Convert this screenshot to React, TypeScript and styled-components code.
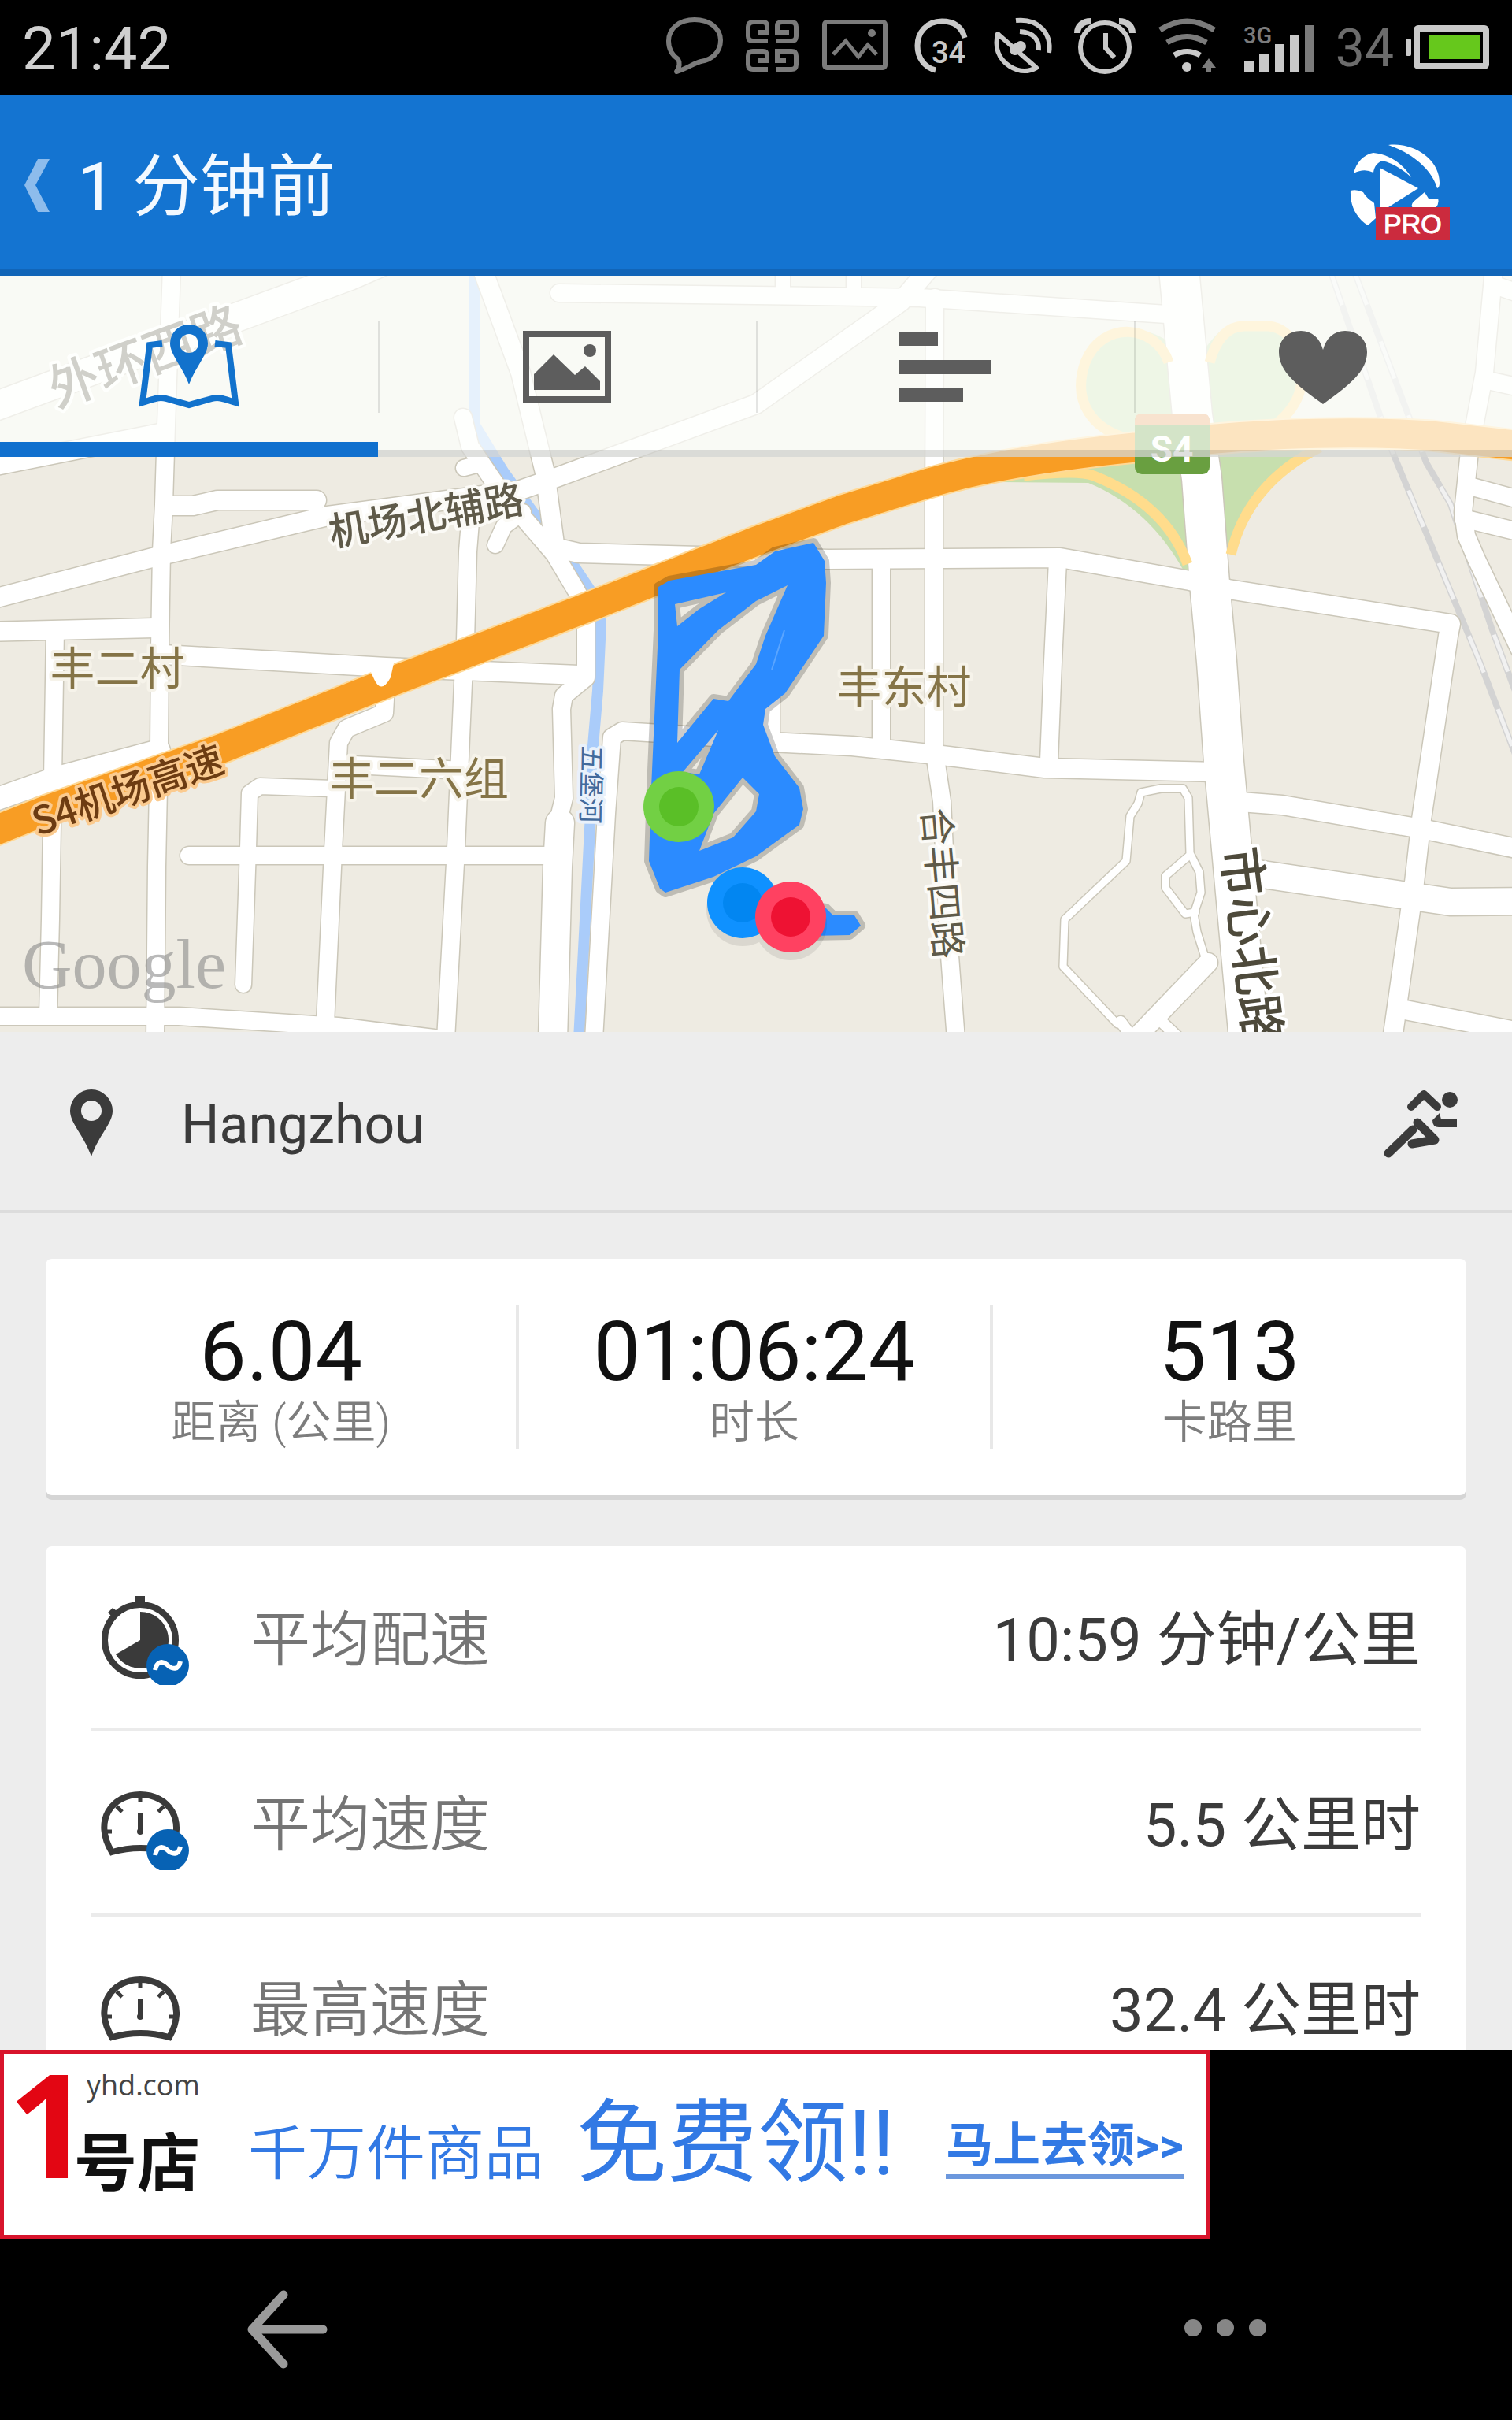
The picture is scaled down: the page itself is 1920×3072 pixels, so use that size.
import React from "react";
import styled, { createGlobalStyle } from "styled-components";

const GlobalStyle = createGlobalStyle`
  * { box-sizing: border-box; }
  body { margin: 0; background: #000; }
  button { border: 0; padding: 0; margin: 0; background: none; color: inherit; font: inherit; cursor: pointer; }
  svg { display: block; flex: none; }
`;

const Screen = styled.div`
  display: flex;
  flex-direction: column;
  height: 100vh;
  overflow: hidden;
  background: #ededed;
  color: #3b3b3b;
  font-family: Roboto, "Noto Sans CJK SC", sans-serif;
`;

/* ---------- Status bar ---------- */

const StatusBar = styled.div`
  flex: none;
  display: flex;
  align-items: center;
  justify-content: space-between;
  height: 120px;
  padding: 0 28px;
  background: #000;
`;

const Clock = styled.time`
  font-size: 76px;
  line-height: 88px;
  color: #cfcfcf;
  padding-top: 4px;
`;

const StatusIcons = styled.div`
  display: flex;
  align-items: center;
  gap: 24px;
  height: 110px;
`;

const BatteryGroup = styled.div`
  display: flex;
  align-items: center;
  gap: 14px;
`;

const BatteryLevel = styled.span`
  font-size: 66px;
  line-height: 72px;
  color: #6c6c6c;
  padding-top: 4px;
`;

/* ---------- Title bar ---------- */

const TitleBar = styled.header`
  flex: none;
  display: flex;
  align-items: center;
  justify-content: space-between;
  height: 230px;
  padding: 0 72px 0 28px;
  background: #1474d1;
  box-shadow: inset 0 -9px #1165b8;
  color: #f3f9ff;
`;

const BackButton = styled.button`
  display: flex;
  align-items: center;
  gap: 32px;
`;

const Title = styled.h1`
  margin: 0;
  padding-top: 6px;
  font-size: 86px;
  line-height: 104px;
  font-weight: 400;
`;

/* ---------- Map and tabs ---------- */

const Content = styled.main`
  flex: 1;
  min-height: 0;
  overflow: hidden;
`;

const MapPanel = styled.section`
  position: relative;
  aspect-ratio: 2 / 1;
  overflow: hidden;
  background: #eeebe2;
`;

const MapDrawing = styled.svg`
  width: 100%;
  height: 100%;
  font-family: "Noto Sans CJK SC", sans-serif;
`;

const Tabs = styled.nav`
  position: absolute;
  top: 0;
  left: 0;
  right: 0;
  display: grid;
  grid-template-columns: repeat(4, 1fr);
  height: 230px;
  background: rgba(254, 255, 252, 0.72);
`;

const Tab = styled.button<{ $active?: boolean }>`
  position: relative;
  display: flex;
  align-items: center;
  justify-content: center;
  box-shadow: ${(p) =>
    p.$active ? "inset 0 -19px #1170ce" : "inset 0 -9px rgba(0, 0, 0, 0.12)"};

  &:not(:first-child)::before {
    content: "";
    position: absolute;
    left: 0;
    top: 58px;
    width: 3px;
    height: 116px;
    background: rgba(0, 0, 0, 0.1);
  }
`;

/* ---------- Activity details ---------- */

const PlaceBar = styled.div`
  display: flex;
  align-items: center;
  justify-content: space-between;
  height: 230px;
  padding: 4px 66px 0 86px;
  border-bottom: 4px solid #dcdcdc;
`;

const Place = styled.div`
  display: flex;
  align-items: center;
  gap: 84px;
`;

const PlaceName = styled.span`
  padding-top: 6px;
  font-size: 68px;
  line-height: 80px;
`;

const Cards = styled.div`
  display: flex;
  flex-direction: column;
  gap: 65px;
  padding: 58px;
`;

const Card = styled.section`
  background: #fff;
  border-radius: 8px;
  box-shadow: 0 6px #d5d5d5;
`;

const Summary = styled(Card)`
  display: grid;
  grid-template-columns: repeat(3, 1fr);
  padding: 58px 0;
`;

const Stat = styled.div`
  display: flex;
  flex-direction: column;
  align-items: center;
  height: 184px;

  &:not(:last-child) {
    border-right: 4px solid #e8e8e8;
  }
`;

const StatValue = styled.strong`
  font-size: 106px;
  line-height: 120px;
  font-weight: 400;
  color: #111;
`;

const StatLabel = styled.span`
  font-size: 57px;
  line-height: 60px;
  font-weight: 350;
  color: #7d7d7d;
`;

const Metrics = styled(Card)`
  padding: 0 58px;
`;

const MetricRow = styled.div`
  display: flex;
  align-items: center;
  height: 235px;
  padding-left: 12px;
  border-bottom: 4px solid #ebebeb;
  font-size: 76px;
  line-height: 92px;
`;

const MetricName = styled.span`
  margin-left: 76px;
  padding-top: 6px;
  font-weight: 350;
  color: #757575;
`;

const MetricValue = styled.span`
  margin-left: auto;
  padding-top: 6px;
`;

/* ---------- Banner ---------- */

const BannerStrip = styled.aside`
  flex: none;
  display: flex;
  background: #000;
`;

const Banner = styled.a`
  display: flex;
  align-items: center;
  width: 80%;
  height: 240px;
  padding: 10px 28px 0 2px;
  border: 5px solid #d8142c;
  background: #fff;
  color: #3279e4;
  text-decoration: none;
  white-space: nowrap;
`;

const BannerText = styled.span`
  display: flex;
  align-items: baseline;
  gap: 42px;
  margin-left: 58px;
  font-size: 75px;
  line-height: 130px;
  font-weight: 350;
`;

const BannerOffer = styled.b`
  font-size: 115px;
  font-weight: 400;
`;

const BannerAction = styled.span`
  margin-left: auto;
  border-bottom: 6px solid #6c98dd;
  font-size: 60px;
  line-height: 72px;
  font-weight: 700;
`;

/* ---------- Navigation bar ---------- */

const NavBar = styled.footer`
  flex: none;
  display: flex;
  align-items: center;
  justify-content: space-between;
  height: 230px;
  padding: 0 16%;
  background: #000;
`;

/* ---------- Status icons ---------- */

const DIM = "#7b7b7b";
const LIT = "#c9c9c9";

const BubbleIcon = () => (
  <svg width="78" height="84" viewBox="845 15 78 84" fill="none" stroke={DIM} strokeWidth="6">
    <path d="M862 72C853 66 850 58 850 49C850 33 864 22 883 22C902 22 916 33 916 48C916 63 905 73 891 75C882 77 874 84 860 88C864 82 865 77 862 72Z" strokeLinejoin="round" />
  </svg>
);

const PetalsIcon = () => (
  <svg width="70" height="84" viewBox="947 15 70 84" fill="none" stroke={DIM} strokeWidth="6">
    <path d="M964 38H975V30Q975 25 970 25H958Q951 25 951 31V43Q951 49 957 49H976" />
    <path d="M1003 38H988V30Q988 25 994 25H1006Q1012 25 1012 31V43Q1012 49 1006 49H987" />
    <path d="M964 74H975V68Q975 62 970 62H957Q951 62 951 68V79Q951 85 957 85H976" />
    <path d="M999 74H988V62H1006Q1012 62 1012 68V79Q1012 85 1006 85H987" />
  </svg>
);

const PictureIcon = () => (
  <svg width="92" height="84" viewBox="1041 15 92 84" fill="none" stroke={DIM} strokeWidth="6">
    <rect x="1048" y="25" width="77" height="58" rx="3" />
    <path d="M1059 66L1075 49L1091 69L1103 54L1114 66" strokeWidth="5" />
    <circle cx="1108" cy="39" r="5" fill={DIM} stroke="none" />
  </svg>
);

const PowerRingIcon = () => (
  <svg width="80" height="84" viewBox="1157 15 80 84">
    <path d="M1226 45C1222 30 1211 24 1197 24C1178 24 1166 38 1166 55C1166 70 1175 83 1189 86" fill="none" stroke={LIT} strokeWidth="7" />
    <text x="1184" y="77" fontSize="38" fontWeight="500" fill={LIT} fontFamily="Roboto, sans-serif">34</text>
  </svg>
);

const SatelliteIcon = () => (
  <svg width="80" height="84" viewBox="1261 15 80 84" fill="none" stroke={LIT} strokeWidth="6">
    <path d="M1268 40L1317 83C1306 89 1294 88 1283 81C1268 71 1264 56 1268 40Z" strokeLinejoin="round" />
    <path d="M1290 60L1297 56" strokeWidth="14" strokeLinecap="round" />
    <path d="M1296 37C1313 38 1321 47 1320 61" />
    <path d="M1291 23C1319 20 1337 39 1333 64" />
  </svg>
);

const AlarmIcon = () => (
  <svg width="80" height="84" viewBox="1365 15 80 84" fill="none" stroke={LIT} strokeWidth="6">
    <circle cx="1404" cy="57" r="31" />
    <path d="M1405 39V58L1416 70" />
    <path d="M1369 39C1369 30 1376 24 1386 24" strokeWidth="8" />
    <path d="M1422 24C1432 24 1439 30 1439 39" strokeWidth="8" />
  </svg>
);

const WifiIcon = () => (
  <svg width="84" height="84" viewBox="1469 15 84 84" fill="none" stroke={DIM} strokeWidth="7">
    <path d="M1474 35Q1508 13 1543 35" />
    <path d="M1483 51Q1508 36 1533 51" />
    <path d="M1492 67Q1508 58 1525 67" stroke={LIT} />
    <circle cx="1508" cy="82" r="6" fill={LIT} stroke="none" />
    <path d="M1536 71L1545 83H1539V89H1533V83H1527Z" fill={DIM} stroke="none" />
  </svg>
);

const SignalIcon = () => (
  <svg width="96" height="84" viewBox="1577 15 96 84" fill={LIT}>
    <text x="1580" y="52" fontSize="29" fontWeight="500" fill={DIM} fontFamily="Roboto, sans-serif">3G</text>
    <rect x="1581" y="75" width="12" height="14" />
    <rect x="1600" y="65" width="12" height="24" />
    <rect x="1620" y="53" width="12" height="36" />
    <rect x="1639" y="41" width="12" height="48" />
    <rect x="1658" y="29" width="12" height="60" fill={DIM} />
  </svg>
);

const BatteryIcon = () => (
  <svg width="108" height="80" viewBox="1784 19 108 80">
    <rect x="1785" y="48" width="7" height="22" rx="2" fill={LIT} />
    <rect x="1799" y="35" width="88" height="48" rx="2" fill="none" stroke={LIT} strokeWidth="8" />
    <rect x="1814" y="43" width="65" height="31" fill="#66c81c" />
  </svg>
);

/* ---------- App icons ---------- */

const Chevron = () => (
  <svg width="38" height="72" viewBox="28 199 38 72" fill="#8dbcec">
    <path d="M48 202H63L45 235L63 269H48L31 235Z" />
  </svg>
);

const ProLogo = () => (
  <svg width="140" height="144" viewBox="1708 163 140 144" fill="#fff">
    <path d="M1763 184C1795 180 1828 202 1828 232Q1828 238 1825 239C1820 220 1800 197 1763 184Z" />
    <path d="M1719 220C1722 206 1732 196 1744 194C1764 196 1782 208 1792 225C1780 214 1766 206 1755 204C1748 207 1745 212 1744 219Q1732 213 1719 220Z" />
    <path d="M1752 213L1801 239L1763 263H1752Z" />
    <path d="M1715 242Q1723 240 1731 244C1736 253 1744 256 1745 258L1747 277L1737 286C1722 277 1714 260 1715 242Z" />
    <path d="M1809 244L1814 252H1826Q1828 258 1823 264H1794Q1791 260 1795 256Z" />
    <rect x="1747" y="263" width="94" height="42" fill="#cb2b3e" />
    <text x="1757" y="296" fontSize="34" stroke="#fff" strokeWidth="1" fontFamily="'Liberation Sans', sans-serif">PRO</text>
  </svg>
);

const MapTabIcon = () => (
  <svg width="132" height="116" viewBox="174 407 132 116" fill="#1272cc">
    <path d="M206 436L190 438L181 511C192 508 200 503 211 506L240 514L269 506C280 503 288 508 299 511L290 438L273 436" fill="none" stroke="#1272cc" strokeWidth="8" />
    <path fillRule="evenodd" d="M240 412A24 24 0 0 1 264 436C264 450 248 466 240 488C232 466 216 450 216 436A24 24 0 0 1 240 412ZM240 424A12 12 0 1 0 240 448A12 12 0 1 0 240 424Z" />
  </svg>
);

const PhotoTabIcon = () => (
  <svg width="116" height="96" viewBox="662 417 116 96" fill="#5d5d5d">
    <rect x="668" y="424" width="104" height="83" fill="none" stroke="#5d5d5d" strokeWidth="8" />
    <path d="M678 475L703 450L730 476L743 465L762 484V495H678Z" />
    <circle cx="749" cy="445" r="8" />
  </svg>
);

const BarsTabIcon = () => (
  <svg width="116" height="96" viewBox="1142 417 116 96" fill="#5d5d5d">
    <rect x="1142" y="421" width="49" height="18" />
    <rect x="1142" y="457" width="116" height="18" />
    <rect x="1142" y="492" width="81" height="18" />
  </svg>
);

const HeartTabIcon = () => (
  <svg width="116" height="96" viewBox="1622 417 116 96" fill="#5d5d5d">
    <path d="M1680 513C1650 491 1624 473 1624 447C1624 431 1636 420 1652 420C1666 420 1676 429 1680 444C1684 429 1694 420 1708 420C1724 420 1736 431 1736 447C1736 473 1710 491 1680 513Z" />
  </svg>
);

const PinIcon = () => (
  <svg width="60" height="88" viewBox="86 1381 60 88" fill="#3b3b3b">
    <path fillRule="evenodd" d="M116 1383A27 27 0 0 1 143 1410C143 1426 126 1440 116 1468C106 1440 89 1426 89 1410A27 27 0 0 1 116 1383ZM116 1397A13 13 0 1 0 116 1423A13 13 0 1 0 116 1397Z" />
  </svg>
);

const RunnerIcon = () => (
  <svg width="98" height="92" viewBox="1756 1379 98 92" fill="none" stroke="#3b3b3b" strokeWidth="10" strokeLinecap="round" strokeLinejoin="round">
    <circle cx="1841" cy="1396" r="10" fill="#3b3b3b" stroke="none" />
    <path d="M1792 1405L1808 1389L1825 1405" />
    <path d="M1828 1413L1819 1422Q1819 1431 1827 1431H1850V1421H1830Z" fill="#3b3b3b" stroke="none" />
    <path d="M1800 1425L1822 1447L1793 1452" strokeWidth="11" />
    <path d="M1794 1434L1763 1464" strokeWidth="11" />
  </svg>
);

const AverageBadge = () => (
  <g>
    <circle cx="85" cy="95" r="27" fill="#0762b4" />
    <path d="M69 101C71 90 78 89 84 94C91 101 99 101 101 90" fill="none" stroke="#fff" strokeWidth="6" />
  </g>
);

const StopwatchIcon = () => (
  <svg width="114" height="120" viewBox="0 0 114 120">
    <circle cx="50" cy="63" r="45" fill="none" stroke="#3a3a3a" strokeWidth="8" />
    <path d="M44 7H56V20H44ZM9 28L15 22L23 28L16 35Z" fill="#3a3a3a" />
    <path d="M50 63V27A36 36 0 1 1 19 81Z" fill="#3a3a3a" />
    <AverageBadge />
  </svg>
);

const GaugeIcon = ({ average }: { average?: boolean }) => (
  <svg width="114" height="120" viewBox="0 0 114 120">
    <path d="M14 97C-10 57 14 24 50 24C86 24 110 57 87 97Q50 87 14 97Z" fill="none" stroke="#3a3a3a" strokeWidth="8" />
    <path d="M50 24V34M20 39L27 46M80 39L73 46M4 71H14M97 71H87" stroke="#3a3a3a" strokeWidth="5" />
    <path d="M50 48V70" stroke="#3a3a3a" strokeWidth="6" />
    <circle cx="50" cy="71" r="4" fill="#3a3a3a" />
    {average && <AverageBadge />}
  </svg>
);

const YhdLogo = () => (
  <svg width="250" height="200" viewBox="7 2627 250 200" role="img" aria-label="1号店">
    <text x="10" y="2765" fontSize="184" fontWeight="700" fill="#e30613" fontFamily="'Open Sans', 'Noto Sans', sans-serif">1</text>
    <text x="110" y="2660" fontSize="36" fill="#444" fontFamily="'Open Sans', sans-serif">yhd.com</text>
    <text x="94" y="2774" fontSize="80" fontWeight="700" fill="#111" fontFamily="'Noto Sans CJK SC', sans-serif">号店</text>
  </svg>
);

const ArrowLeftIcon = () => (
  <svg width="114" height="104" viewBox="307 2906 114 104" fill="none" stroke="#9a9a9a" strokeWidth="11" strokeLinecap="round" strokeLinejoin="round">
    <path d="M360 2914L320 2958L360 3002M322 2958H410" />
  </svg>
);

const DotsIcon = () => (
  <svg width="114" height="40" viewBox="0 0 114 40" fill="#868686">
    <circle cx="16" cy="18" r="11" />
    <circle cx="57" cy="18" r="11" />
    <circle cx="98" cy="18" r="11" />
  </svg>
);

/* ---------- Map ---------- */

type Road = [width: number, path: string];

const roads: Road[] = [
  [22, "M218 340L211 540L208 640L205 700L203 823L202 950L199 1100L197 1320"],
  [36, "M-20 521L444 350L490 330"],
  [24, "M-20 594L208 549"],
  [24, "M-20 763L205 705L416 655L658 623L704 607L960 513L1144 383L1185 335"],
  [24, "M214 642H245L276 635H402"],
  [22, "M598 650L594 700L591 813L588 867L579 1077L566 1320"],
  [24, "M612 340L661 473L692 600L704 690"],
  [22, "M588 530L597 567L631 617L667 660L704 703L732 750L744 773V860L716 883L713 900L716 1013L707 1050"],
  [36, "M711 1045L708 1100L702 1320"],
  [20, "M589 594L612 588L631 617"],
  [20, "M629 692L640 668L664 650"],
  [22, "M978 942L870 933L790 928L777 936L770 1033L754 1320"],
  [24, "M704 695L735 702L888 706L1052 710L1346 708L1511 737L1560 748L1842 792L1839 807L1805 1040L1796 1120L1768 1320"],
  [24, "M-20 802L196 797"],
  [22, "M70 800L67 987L64 1167L61 1290"],
  [24, "M208 831L490 847L735 857"],
  [28, "M-20 1020L73 987L202 953"],
  [22, "M490 870L488 905L440 925L430 943L423 1080L413 1300"],
  [22, "M429 970L588 978"],
  [20, "M423 1001L330 998L317 1007L315 1077L309 1250"],
  [22, "M240 1086H704"],
  [22, "M-20 1290H227L429 1303L551 1318"],
  [22, "M710 372L960 375L1168 378L1496 400"],
  [18, "M994 330V372M1084 330V374"],
  [22, "M1187 378L1186 640V950L1196 1017L1205 1200L1214 1320"],
  [22, "M1119 712V950"],
  [22, "M1343 712L1337 840L1332 967"],
  [24, "M978 870V942L1082 947L1180 957L1327 975L1550 980"],
  [22, "M1898 330L1885 473L1866 573L1858 650L1862 680L1875 710L1930 825"],
  [22, "M1885 482L1940 494M1866 617L1940 637M1858 658L1940 678M1898 362L1940 376"],
  [24, "M1575 1018L1628 1022L1805 1052L1940 1080"],
  [34, "M1590 1108L1787 1137L1842 1145L1940 1144"],
  [24, "M1774 1280L1940 1312"],
  [9, "M1530 1215L1520 1183L1516 1160L1525 1133L1523 1107L1511 1083L1509 1013L1502 1001H1474L1449 1006L1445 1020L1435 1036L1430 1093L1352 1167L1350 1227L1419 1300"],
  [9, "M1509 1087L1480 1112V1127L1505 1160L1518 1158"],
  [24, "M1534 1222L1440 1320"],
  [14, "M1423 1297L1440 1320M1468 1290L1499 1320"],
  [50, "M1496 330L1514 527L1526 607L1536 740L1545 840L1554 967L1566 1100L1586 1320"],
];

const highway =
  "M-20 1060L60 1028L282 950L484 870L741 773L960 687L1070 647L1180 613C1260 590 1350 577 1441 568C1560 552 1700 545 1817 553L1940 567";

const track =
  "M836 745L850 737L960 717L984 700L1033 689L1047 712L1049 740L1046 807L997 880L972 900L969 920L984 960L1015 1000L1020 1027L1015 1047L960 1087L906 1113L845 1133L838 1128L824 1093L827 1000L836 800Z" +
  "M857 767L922 752L888 773L860 795Z" +
  "M1000 743L960 763L912 800L863 850L860 943L906 887L925 890L960 843L972 807Z" +
  "M912 927L888 983L867 980Z" +
  "M943 987L964 1008L960 1030L931 1063L888 1080L906 1033Z" +
  "M1030 1150L1049 1153L1058 1162H1085L1093 1175L1079 1187L1030 1188Z";

const rail1 = "M1688 340L1768 573L1879 840L1925 960";
const rail2 = "M1718 340L1811 587L1842 640L1895 800L1925 880";

type Label = {
  text: string;
  x: number;
  y: number;
  size: number;
  angle?: number;
  weight?: number;
  color: string;
  halo: string;
};

const labels: Label[] = [
  { text: "外环西路", x: 184, y: 452, size: 64, angle: -20, weight: 500, color: "#5a5648", halo: "#fff" },
  { text: "机场北辅路", x: 541, y: 654, size: 50, angle: -10, weight: 500, color: "#5f5a49", halo: "#fbfaf6" },
  { text: "丰二村", x: 149, y: 848, size: 57, color: "#857447", halo: "#f6f3ea" },
  { text: "丰二六组", x: 532, y: 988, size: 57, color: "#857447", halo: "#f6f3ea" },
  { text: "丰东村", x: 1148, y: 872, size: 57, color: "#857447", halo: "#f6f3ea" },
  { text: "S4机场高速", x: 162, y: 1003, size: 49, angle: -19, weight: 500, color: "#6d3c12", halo: "#fbcb90" },
  { text: "五堡河", x: 751, y: 996, size: 33, angle: 91, color: "#426a9c", halo: "#e9f1fb" },
  { text: "合丰四路", x: 1197, y: 1121, size: 48, angle: 85, color: "#5f5a49", halo: "#fbfaf6" },
  { text: "市心北路", x: 1590, y: 1200, size: 63, angle: 83, weight: 500, color: "#4e4a3b", halo: "#fff" },
];

const RouteMap = () => (
  <MapDrawing viewBox="0 350 1920 960" preserveAspectRatio="xMidYMid slice" role="img" aria-label="Google">
    <rect y="350" width="1920" height="960" fill="#eeebe2" />

    {/* Interchange lawns */}
    <g fill="#c7dfae">
      <path d="M1505 460C1480 408 1400 402 1378 460C1362 510 1390 545 1430 556H1520Z" />
      <path d="M1525 450C1545 420 1560 409 1580 409H1612C1640 415 1660 450 1655 490C1650 520 1620 545 1600 552H1520Z" />
      <path d="M1270 612L1382 613Q1460 645 1505 728L1556 708C1572 650 1610 605 1664 572L1440 560Z" />
    </g>

    <path d="M603 340V540L640 600L667 637L689 667L723 710L750 750L763 790L759 877L753 947L750 1033L735 1320" fill="none" stroke="#aaccfa" strokeWidth="14" />

    {/* Railway */}
    <g fill="none">
      <path d={rail1} stroke="#d3d3d3" strokeWidth="8" />
      <path d={rail2} stroke="#d3d3d3" strokeWidth="8" />
      <path d={rail1} stroke="#f1f1f1" strokeWidth="5" strokeDasharray="50 50" />
      <path d={rail2} stroke="#f1f1f1" strokeWidth="5" strokeDasharray="50 50" />
    </g>

    <g fill="none" strokeLinecap="round" strokeLinejoin="round">
      {roads.map(([width, path]) => (
        <path key={path} d={path} stroke="#cbc7b9" strokeWidth={width + 3} />
      ))}
      {roads.map(([width, path]) => (
        <path key={path} d={path} stroke="#fff" strokeWidth={width} />
      ))}
    </g>

    {/* Ramps */}
    <g fill="none" stroke="#ffdc8c" strokeWidth="13">
      <path d="M1484 460C1468 412 1400 405 1378 460C1360 512 1390 545 1430 556" />
      <path d="M1536 460C1545 428 1560 414 1580 414H1612C1640 418 1658 450 1652 490C1647 520 1620 542 1600 550" />
      <path d="M1300 604Q1370 596 1389 604Q1480 640 1508 716" />
      <path d="M1676 568C1620 596 1578 640 1563 704" />
    </g>

    <path d={highway} fill="none" stroke="#ffd996" strokeWidth="41" />
    <path d={highway} fill="none" stroke="#f89d24" strokeWidth="37" />
    <path d="M466 842H500L496 860Q484 882 475 862Z" fill="#fff" />

    {/* Road shield */}
    <rect x="1441" y="525" width="95" height="77" rx="9" fill="#699f40" />
    <path d="M1441 540V534Q1441 525 1450 525H1527Q1536 525 1536 534V540Z" fill="#ea9b5c" />
    <text x="1488" y="586" fontSize="46" fontWeight="700" textAnchor="middle" fill="#fff" fontFamily="Roboto, sans-serif">S4</text>

    {labels.map(({ text, x, y, size, angle = 0, weight = 400, color, halo }) => (
      <text
        key={text}
        transform={`rotate(${angle} ${x} ${y})`}
        x={x}
        y={y}
        dy="0.37em"
        textAnchor="middle"
        fontSize={size}
        fontWeight={weight}
        fill={color}
        stroke={halo}
        strokeWidth="8"
        strokeLinejoin="round"
        paintOrder="stroke"
      >
        {text}
      </text>
    ))}

    {/* Recorded track */}
    <path d={track} fill="none" stroke="#000" strokeOpacity="0.2" strokeWidth="12" strokeLinejoin="round" />
    <path d={track} fillRule="evenodd" fill="#2b8bff" />
    <path d="M996 800L980 850" stroke="#5aa5ff" strokeWidth="2" />

    <g fill="#000" opacity="0.08">
      <circle cx="943" cy="1155" r="46" />
      <circle cx="1004" cy="1173" r="46" />
    </g>
    <circle cx="862" cy="1024" r="45" fill="#72d044" />
    <circle cx="862" cy="1024" r="25" fill="#5abf27" />
    <circle cx="943" cy="1146" r="45" fill="#0f91ff" />
    <circle cx="943" cy="1146" r="25" fill="#0286f1" />
    <circle cx="1004" cy="1164" r="45" fill="#ff4161" />
    <circle cx="1004" cy="1164" r="25" fill="#ee1233" />

    <text x="28" y="1254" fontSize="88" fill="#8a8a8a" fillOpacity="0.6" fontFamily="'Liberation Serif', serif">Google</text>
  </MapDrawing>
);

/* ---------- Page ---------- */

const stats = [
  { value: "6.04", label: "距离 (公里)" },
  { value: "01:06:24", label: "时长" },
  { value: "513", label: "卡路里" },
];

const metrics = [
  { icon: <StopwatchIcon />, name: "平均配速", value: "10:59 分钟/公里" },
  { icon: <GaugeIcon average />, name: "平均速度", value: "5.5 公里时" },
  { icon: <GaugeIcon />, name: "最高速度", value: "32.4 公里时" },
];

export default function App() {
  return (
    <Screen lang="zh-CN">
      <GlobalStyle />
      <StatusBar>
        <Clock>21:42</Clock>
        <StatusIcons>
          <BubbleIcon />
          <PetalsIcon />
          <PictureIcon />
          <PowerRingIcon />
          <SatelliteIcon />
          <AlarmIcon />
          <WifiIcon />
          <SignalIcon />
          <BatteryGroup>
            <BatteryLevel>34</BatteryLevel>
            <BatteryIcon />
          </BatteryGroup>
        </StatusIcons>
      </StatusBar>

      <TitleBar>
        <BackButton type="button">
          <Chevron />
          <Title>1 分钟前</Title>
        </BackButton>
        <button type="button" aria-label="PRO">
          <ProLogo />
        </button>
      </TitleBar>

      <Content>
        <MapPanel>
          <RouteMap />
          <Tabs>
            <Tab type="button" $active aria-label="地图"><MapTabIcon /></Tab>
            <Tab type="button" aria-label="照片"><PhotoTabIcon /></Tab>
            <Tab type="button" aria-label="分段"><BarsTabIcon /></Tab>
            <Tab type="button" aria-label="心率"><HeartTabIcon /></Tab>
          </Tabs>
        </MapPanel>

        <PlaceBar>
          <Place>
            <PinIcon />
            <PlaceName>Hangzhou</PlaceName>
          </Place>
          <RunnerIcon />
        </PlaceBar>

        <Cards>
          <Summary>
            {stats.map((stat) => (
              <Stat key={stat.label}>
                <StatValue>{stat.value}</StatValue>
                <StatLabel>{stat.label}</StatLabel>
              </Stat>
            ))}
          </Summary>
          <Metrics>
            {metrics.map((metric) => (
              <MetricRow key={metric.name}>
                {metric.icon}
                <MetricName>{metric.name}</MetricName>
                <MetricValue>{metric.value}</MetricValue>
              </MetricRow>
            ))}
          </Metrics>
        </Cards>
      </Content>

      <BannerStrip>
        <Banner href="#yhd">
          <YhdLogo />
          <BannerText>
            千万件商品
            <BannerOffer>免费领!!</BannerOffer>
          </BannerText>
          <BannerAction>马上去领&gt;&gt;</BannerAction>
        </Banner>
      </BannerStrip>

      <NavBar>
        <button type="button" aria-label="返回"><ArrowLeftIcon /></button>
        <button type="button" aria-label="更多"><DotsIcon /></button>
      </NavBar>
    </Screen>
  );
}
